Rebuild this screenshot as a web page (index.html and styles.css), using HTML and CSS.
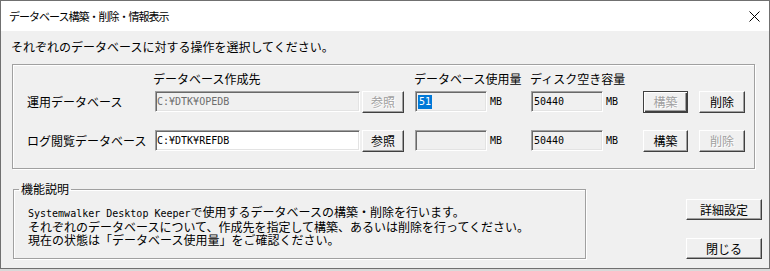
FILE: index.html
```html
<!DOCTYPE html>
<html lang="ja">
<head>
  <meta charset="UTF-8" />
  <title>データベース構築・削除・情報表示</title>
  <link rel="stylesheet" href="styles.css">
</head>
<body>

  <div class="window">
    <!-- Titelleiste -->
    <div class="titlebar">
      <span class="title">データベース構築・削除・情報表示</span>
      <svg class="close" width="11" height="11" viewBox="0 0 11 11">
        <path d="M0.5 0.5 L10.5 10.5 M10.5 0.5 L0.5 10.5" stroke="#000" stroke-width="1" fill="none"/>
      </svg>
    </div>

    <div class="client">
      <p class="prompt">それぞれのデータベースに対する操作を選択してください。</p>

      <!-- DB Gruppe -->
      <div class="group db-group">
        <div class="db-row heads">
          <span class="head head-path">データベース作成先</span>
          <span class="head head-used">データベース使用量</span>
          <span class="head head-free">ディスク空き容量</span>
        </div>

        <div class="db-row">
          <span class="db-label">運用データベース</span>
          <span class="field path disabled han">C:¥DTK¥OPEDB</span>
          <button class="btn ref" disabled>参照</button>
          <span class="field size used disabled han"><span class="sel">51</span></span>
          <span class="unit unit-used han">MB</span>
          <span class="field size disabled han">50440</span>
          <span class="unit unit-free han">MB</span>
          <button class="btn build default" disabled>構築</button>
          <button class="btn del">削除</button>
        </div>

        <div class="db-row">
          <span class="db-label">ログ閲覧データベース</span>
          <span class="field path han">C:¥DTK¥REFDB</span>
          <button class="btn ref">参照</button>
          <span class="field size used disabled han"></span>
          <span class="unit unit-used han">MB</span>
          <span class="field size disabled han">50440</span>
          <span class="unit unit-free han">MB</span>
          <button class="btn build">構築</button>
          <button class="btn del" disabled>削除</button>
        </div>
      </div>

      <div class="bottom">
        <fieldset class="desc">
          <legend>機能説明</legend>
          <p><span class="han">Systemwalker Desktop Keeper</span>で使用するデータベースの構築・削除を行います。<br>それぞれのデータベースについて、作成先を指定して構築、あるいは削除を行ってください。<br>現在の状態は「データベース使用量」をご確認ください。</p>
        </fieldset>

        <div class="side-btns">
          <button class="btn wide">詳細設定</button>
          <button class="btn wide">閉じる</button>
        </div>
      </div>
    </div>
  </div>

</body>
</html>
```

FILE: styles.css
```css
:root {
  --face: #f0f0f0;
  --light: #ffffff;
  --shadow: #a0a0a0;
  --dark: #696969;
  --grayed: #a0a0a0;
  --frame: #707070;
}

* {
  box-sizing: border-box;
}

body {
  margin: 0;
  background-color: #d9d9d9;
  font-family: "Noto Sans CJK JP", sans-serif;
  font-size: 12px;
  color: #000;
}

.window {
  width: 770px;
  height: 269px;
  border: 1px solid var(--frame);
  background-color: var(--face);
  display: flex;
  flex-direction: column;
}

.titlebar {
  height: 30px;
  flex: none;
  background-color: #fff;
  display: flex;
  align-items: center;
  padding-left: 8px;
}

.title {
  font-size: 11px;
  letter-spacing: -1px;
  line-height: 14px;
}

.close {
  margin-left: auto;
  margin-right: 9px;
}

.client {
  flex: 1;
  padding: 0 0 0 11px;
}

.prompt {
  margin: 9px 0 0 -1px;
  line-height: 14px;
}

.han {
  font-family: "DejaVu Sans Mono", "Liberation Mono", monospace;
  font-size: 10px;
}

/* Gruppenrahmen */
.group {
  border: 1px solid var(--shadow);
  box-shadow: 1px 1px 0 var(--light), inset 1px 1px 0 var(--light);
}

.db-group {
  width: 743px;
  margin-top: 10px;
  padding: 7px 0 16px 14px;
}

.db-row {
  display: flex;
  align-items: flex-start;
  height: 22px;
  margin-top: 17px;
}

.db-row.heads {
  height: 14px;
  line-height: 14px;
  margin-top: 0;
  margin-bottom: -12px;
}

.head-path {
  margin-left: 126px;
  width: 261px;
}

.head-used {
  width: 116px;
}

.db-label {
  width: 128px;
  line-height: 21px;
}

/* Eingabefelder */
.field {
  display: block;
  height: 21px;
  line-height: 19px;
  padding-left: 1px;
  background-color: #fff;
  border-top: 1px solid var(--shadow);
  border-left: 1px solid var(--shadow);
  border-right: 1px solid var(--light);
  border-bottom: 1px solid var(--light);
  box-shadow: inset 1px 1px 0 var(--dark), inset -1px -1px 0 #e3e3e3;
  white-space: nowrap;
}

.field.disabled {
  background-color: var(--face);
  color: #6d6d6d;
}

.field.path {
  width: 205px;
}

.field.size {
  width: 72px;
  padding-left: 2px;
  color: #000;
}

.field.used {
  margin-left: 11px;
}

.sel {
  background-color: #0078d7;
  color: #fff;
  padding: 1px 1px 2px;
}

.unit {
  line-height: 21px;
  padding-left: 3px;
}

.unit-used {
  width: 44px;
}

.unit-free {
  width: 40px;
}

/* Knöpfe */
.btn {
  height: 22px;
  padding: 0;
  font-family: "Noto Sans CJK JP", sans-serif;
  font-size: 12px;
  line-height: 18px;
  color: #000;
  background-color: var(--face);
  border-top: 1px solid var(--light);
  border-left: 1px solid var(--light);
  border-right: 1px solid #404040;
  border-bottom: 1px solid #404040;
  box-shadow: inset -1px -1px 0 var(--shadow);
  border-radius: 0;
}

.btn:disabled {
  color: var(--grayed);
  text-shadow: 1px 1px 0 #fff;
}

.btn.default {
  border: 1px solid #404040;
  box-shadow: inset 1px 1px 0 var(--light), inset -1px -1px 0 #404040, inset -2px -2px 0 var(--shadow);
}

.btn.ref {
  width: 42px;
  margin-left: 2px;
}

.btn.build {
  width: 45px;
}

.btn.del {
  width: 46px;
  margin-left: 11px;
}

/* Beschreibung */
.bottom {
  display: flex;
  align-items: flex-start;
  margin-top: 13px;
}

.desc {
  width: 573px;
  height: 77px;
  margin: 0 0 0 1px;
  padding: 9px 0 0 5px;
  border: 1px solid var(--shadow);
  box-shadow: 1px 1px 0 var(--light), inset 1px 1px 0 var(--light);
}

.desc legend {
  padding: 0 2px;
  line-height: 14px;
}

.desc p {
  margin: 0 0 0 9px;
  line-height: 13px;
  white-space: nowrap;
}

.side-btns {
  display: flex;
  flex-direction: column;
  gap: 18px;
  margin: 17px 0 0 100px;
}

.btn.wide {
  width: 76px;
  height: 21px;
}
```
